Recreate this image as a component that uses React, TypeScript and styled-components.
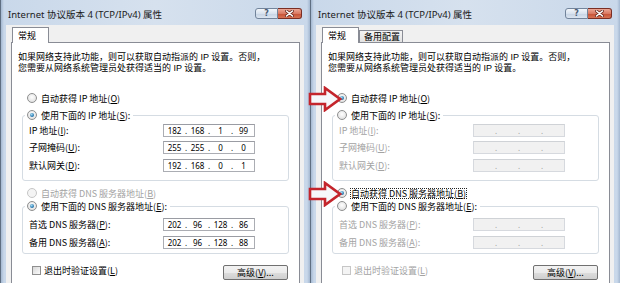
import React from "react";
import styled, { createGlobalStyle } from "styled-components";

const GlobalStyle = createGlobalStyle`
  html, body {
    margin: 0;
    padding: 0;
    background: #ffffff;
  }
  body {
    font-family: "Noto Sans CJK SC", "Noto Sans", sans-serif;
    color: #000;
  }
`;

const Screen = styled.div`
  position: relative;
  display: flex;
  width: 620px;
  height: 283px;
  overflow: hidden;
`;

const Window = styled.div`
  flex: none;
  width: 310px;
  height: 283px;
  box-sizing: border-box;
  overflow: hidden;
  display: flex;
  flex-direction: column;
  padding: 0 6px 0 5px;
  border-left: 1px solid #5f6f82;
  background: linear-gradient(
    to right,
    #a4b8d1 0,
    #c9d8ea 3px,
    #d6e1ee 50%,
    #c9d8ea calc(100% - 3px),
    #a4b8d1 100%
  );
`;

const TitleBar = styled.div`
  height: 25px;
  flex: none;
  display: flex;
  align-items: flex-start;
`;

const Caption = styled.span`
  margin: 9px 0 0 2px;
  font-family: "Noto Sans", "Noto Sans CJK SC", sans-serif;
  font-size: 9.5px;
  line-height: 12px;
  color: #1b1b1b;
  white-space: nowrap;
`;

const CaptionButtons = styled.div`
  display: flex;
  margin: 8px 2px 0 auto;
`;

const HelpButton = styled.div`
  width: 23px;
  height: 11px;
  box-sizing: border-box;
  border: 1px solid #72849b;
  border-radius: 3px 0 0 3px;
  background: linear-gradient(#f2f6fb, #d9e3ef 50%, #c5d3e4 51%, #dbe5f1);
  display: flex;
  align-items: center;
  justify-content: center;
  font-family: "DejaVu Sans", sans-serif;
  font-weight: bold;
  font-size: 8px;
  line-height: 8px;
  color: #4a5d75;
`;

const CloseButton = styled.div`
  width: 24px;
  height: 11px;
  box-sizing: border-box;
  border: 1px solid #7a2e24;
  border-left: none;
  border-radius: 0 3px 3px 0;
  background: linear-gradient(#eca796, #da7a63 50%, #c64f34 51%, #d77355);
  display: flex;
  align-items: center;
  justify-content: center;
`;

const Body = styled.div`
  flex: none;
  background: #f0f0f0;
  padding: 2px 4px 0 5px;
`;

const TabStrip = styled.div`
  display: flex;
  align-items: flex-end;
  height: 15px;
  padding-left: 1px;
`;

const Tab = styled.div<{ $active?: boolean }>`
  position: relative;
  z-index: 1;
  box-sizing: border-box;
  border: 1px solid #898c95;
  border-bottom: none;
  font-size: 9px;
  white-space: nowrap;
  ${(p) =>
    p.$active
      ? `
    width: 37px;
    height: 16px;
    margin-bottom: -1px;
    padding: 3px 0 0 5px;
    line-height: 9px;
    background: #ffffff;
  `
      : `
    width: 44px;
    height: 12px;
    padding: 1px 0 0 4px;
    line-height: 10px;
    background: linear-gradient(#f4f4f4, #e2e2e2);
  `}
`;

const Panel = styled.div`
  width: 289px;
  box-sizing: border-box;
  border: 1px solid #898c95;
  background: #ffffff;
  padding: 9px 0 30px;
`;

const Intro = styled.p`
  margin: 0 0 0 6px;
  font-family: "Liberation Sans", "Noto Sans CJK SC", sans-serif;
  font-size: 9px;
  line-height: 10.5px;
  white-space: nowrap;
`;

const OptionRow = styled.div<{ $disabled?: boolean; $indent?: number; $top?: number }>`
  display: flex;
  align-items: center;
  gap: 3px;
  height: 13px;
  padding-left: ${(p) => p.$indent ?? 0}px;
  margin-top: ${(p) => p.$top ?? 0}px;
  font-size: 9px;
  line-height: 11px;
  white-space: nowrap;
  color: ${(p) => (p.$disabled ? "#a3a3a3" : "#000")};
`;

const RadioMark = styled.span<{ $checked?: boolean; $disabled?: boolean }>`
  position: relative;
  flex: none;
  width: 10px;
  height: 10px;
  box-sizing: border-box;
  border-radius: 50%;
  border: 1px solid ${(p) => (p.$disabled ? "#c6c6c6" : "#8e8f8f")};
  background: ${(p) =>
    p.$disabled
      ? "#f4f4f4"
      : "radial-gradient(circle at 50% 40%, #ffffff, #e4e4e4 70%, #d2d2d2)"};
  &::after {
    content: "";
    display: ${(p) => (p.$checked ? "block" : "none")};
    position: absolute;
    left: 2px;
    top: 2px;
    width: 4px;
    height: 4px;
    border-radius: 50%;
    background: radial-gradient(circle at 40% 35%, #a7dcf4, #2c7db3 60%, #174a73);
  }
`;

const OptionText = styled.span<{ $focus?: boolean }>`
  padding: 0 1px;
  outline: ${(p) => (p.$focus ? "1px dotted #222" : "none")};
  outline-offset: -1px;
`;

const Group = styled.fieldset<{ $top?: number }>`
  margin: ${(p) => p.$top ?? 4}px 10px 0;
  padding: 0;
  border: 1px solid #d5dce3;
  border-radius: 3px;
  min-inline-size: 0;
`;

const GroupLegend = styled.legend`
  margin-left: 2px;
  padding: 0 2px;
`;

const FieldGrid = styled.div<{ $pad: string; $gap: number; $disabled?: boolean }>`
  display: grid;
  grid-template-columns: 134px 92px;
  row-gap: ${(p) => p.$gap}px;
  padding: ${(p) => p.$pad};
  font-size: 9px;
  line-height: 13px;
  white-space: nowrap;
  color: ${(p) => (p.$disabled ? "#a3a3a3" : "#000")};
`;

const IpField = styled.div<{ $disabled?: boolean }>`
  display: flex;
  width: 92px;
  height: 13px;
  box-sizing: border-box;
  padding-left: 1px;
  border: 1px solid ${(p) => (p.$disabled ? "#d6d9de" : "#abadb3")};
  border-top-color: ${(p) => (p.$disabled ? "#cfd2d6" : "#9a9ca3")};
  background: ${(p) => (p.$disabled ? "#f1f1f1" : "#ffffff")};
  color: ${(p) => (p.$disabled ? "#9c9c9c" : "#000")};
  font-family: "Noto Sans", sans-serif;
  font-size: 8px;
  line-height: 11px;
`;

const IpPart = styled.span`
  width: 19px;
  text-align: center;
`;

const IpDot = styled.span`
  width: 4px;
  text-align: center;
`;

const Footer = styled.div`
  display: flex;
  justify-content: space-between;
  align-items: flex-start;
  margin-top: 10.5px;
  padding: 0 11px 0 20px;
`;

const CheckRow = styled.div<{ $disabled?: boolean }>`
  display: flex;
  align-items: center;
  gap: 3px;
  height: 13px;
  font-size: 9px;
  white-space: nowrap;
  color: ${(p) => (p.$disabled ? "#a3a3a3" : "#000")};
`;

const CheckMark = styled.span<{ $disabled?: boolean }>`
  width: 9px;
  height: 9px;
  box-sizing: border-box;
  border: 1px solid ${(p) => (p.$disabled ? "#c6c6c6" : "#8f8f8f")};
  background: ${(p) =>
    p.$disabled ? "#f4f4f4" : "linear-gradient(135deg, #d8d8d8, #fbfbfb)"};
`;

const PushButton = styled.div`
  width: 65px;
  height: 15px;
  margin-top: 1px;
  box-sizing: border-box;
  border: 1px solid #707070;
  border-radius: 2px;
  background: linear-gradient(#f2f2f2, #ebebeb 50%, #dddddd 51%, #cfcfcf);
  display: flex;
  align-items: center;
  justify-content: center;
  font-size: 9px;
  white-space: nowrap;
`;

const Pointer = styled.svg<{ $top: number }>`
  position: absolute;
  left: 308px;
  top: ${(p) => p.$top}px;
  width: 34px;
  height: 26px;
`;

const IpBox = ({ value, disabled }: { value?: string[]; disabled?: boolean }) => (
  <IpField $disabled={disabled}>
    {[0, 1, 2, 3].map((i) => (
      <React.Fragment key={i}>
        {i > 0 && <IpDot>.</IpDot>}
        <IpPart>{value ? value[i] : ""}</IpPart>
      </React.Fragment>
    ))}
  </IpField>
);

const Radio = ({
  checked,
  disabled,
  focus,
  indent,
  top,
  children,
}: {
  checked?: boolean;
  disabled?: boolean;
  focus?: boolean;
  indent?: number;
  top?: number;
  children: React.ReactNode;
}) => (
  <OptionRow $disabled={disabled} $indent={indent} $top={top}>
    <RadioMark $checked={checked} $disabled={disabled} />
    <OptionText $focus={focus}>{children}</OptionText>
  </OptionRow>
);

type DialogProps = {
  alternate?: boolean;
};

const Dialog = ({ alternate }: DialogProps) => {
  const ipAuto = !!alternate;
  const dnsAuto = !!alternate;

  return (
    <Window>
      <TitleBar>
        <Caption>Internet 协议版本 4 (TCP/IPv4) 属性</Caption>
        <CaptionButtons>
          <HelpButton>?</HelpButton>
          <CloseButton>
            <svg width="9" height="7" viewBox="0 0 9 7">
              <path d="M1.5 1 L7.5 6 M7.5 1 L1.5 6" stroke="#6b2a20" strokeWidth="3" strokeLinecap="round" />
              <path d="M1.5 1 L7.5 6 M7.5 1 L1.5 6" stroke="#ffffff" strokeWidth="1.6" strokeLinecap="round" />
            </svg>
          </CloseButton>
        </CaptionButtons>
      </TitleBar>

      <Body>
        <TabStrip>
          <Tab $active>常规</Tab>
          {alternate && <Tab>备用配置</Tab>}
        </TabStrip>

        <Panel>
          <Intro>
            如果网络支持此功能，则可以获取自动指派的 IP 设置。否则，
            <br />
            您需要从网络系统管理员处获得适当的 IP 设置。
          </Intro>

          <Radio checked={ipAuto} indent={15} top={18.5}>
            自动获得 IP 地址(<u>O</u>)
          </Radio>

          <Group>
            <GroupLegend>
              <Radio checked={!ipAuto}>
                使用下面的 IP 地址(<u>S</u>):
              </Radio>
            </GroupLegend>
            <FieldGrid $pad="2px 0 8px 6px" $gap={4.5} $disabled={ipAuto}>
              <span>IP 地址(<u>I</u>):</span>
              <IpBox disabled={ipAuto} value={ipAuto ? undefined : ["182", "168", "1", "99"]} />
              <span>子网掩码(<u>U</u>):</span>
              <IpBox disabled={ipAuto} value={ipAuto ? undefined : ["255", "255", "0", "0"]} />
              <span>默认网关(<u>D</u>):</span>
              <IpBox disabled={ipAuto} value={ipAuto ? undefined : ["192", "168", "0", "1"]} />
            </FieldGrid>
          </Group>

          <Radio checked={dnsAuto} disabled={!ipAuto} focus={alternate} indent={15} top={6}>
            自动获得 DNS 服务器地址(<u>B</u>)
          </Radio>

          <Group $top={0}>
            <GroupLegend>
              <Radio checked={!dnsAuto}>
                使用下面的 DNS 服务器地址(<u>E</u>):
              </Radio>
            </GroupLegend>
            <FieldGrid $pad="5px 0 4px 6px" $gap={5} $disabled={dnsAuto}>
              <span>首选 DNS 服务器(<u>P</u>):</span>
              <IpBox disabled={dnsAuto} value={dnsAuto ? undefined : ["202", "96", "128", "86"]} />
              <span>备用 DNS 服务器(<u>A</u>):</span>
              <IpBox disabled={dnsAuto} value={dnsAuto ? undefined : ["202", "96", "128", "88"]} />
            </FieldGrid>
          </Group>

          <Footer>
            <CheckRow $disabled={alternate}>
              <CheckMark $disabled={alternate} />
              <span>退出时验证设置(<u>L</u>)</span>
            </CheckRow>
            <PushButton>
              高级(<u>V</u>)...
            </PushButton>
          </Footer>
        </Panel>
      </Body>
    </Window>
  );
};

const Arrow = ({ top }: { top: number }) => (
  <Pointer $top={top} viewBox="0 0 34 26">
    <path
      d="M2 8 H17 V2 L32 13 L17 24 V18 H2 Z"
      fill="#f6f8fb"
      stroke="#c4252c"
      strokeWidth="2.6"
      strokeLinejoin="miter"
    />
  </Pointer>
);

export default function App() {
  return (
    <>
      <GlobalStyle />
      <Screen>
        <Dialog />
        <Dialog alternate />
        <Arrow top={86} />
        <Arrow top={181} />
      </Screen>
    </>
  );
}
